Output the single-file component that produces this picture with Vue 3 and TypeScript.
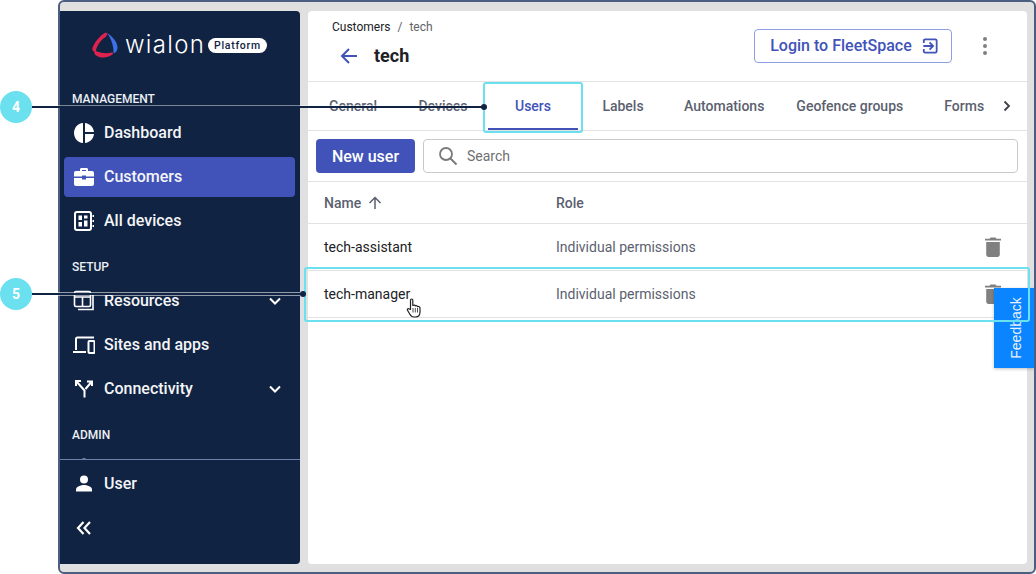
<template>
  <div class="stage">
    <div class="frame">
      <aside class="sidebar">
        <div class="logo">
          <svg class="logo__mark" width="26" height="26" viewBox="0 0 26 26">
            <path d="M13.500 0.500 C8 3.500 2.500 10 0.500 16 C0 19 1.500 20.500 3.800 19 C5 13.500 8.500 8 13 5.500 C14 4.800 15 3.500 15.500 1.500 Z" fill="#e0234e" />
            <path d="M3 18.500 C8 21 14 22 20 20.500 C21 20.500 21.500 21.500 20.500 22.500 C16 25.800 9.500 26.500 5 24 C2.500 23 1.500 20 3 18.500 Z" fill="#e0234e" />
            <path d="M15 1 C20 4 25.500 10 25.500 15.500 C25.500 18.500 23.500 21.500 21.500 21 C21.800 15 20 8 15 1 Z" fill="#3f6fe8" />
          </svg>
          <span class="logo__word">wialon</span>
          <span class="logo__badge">Platform</span>
        </div>

        <nav class="nav">
          <template v-for="group in navGroups" :key="group.title">
            <div class="nav__title">{{ group.title }}</div>
            <div
              v-for="item in group.items"
              :key="item.label"
              class="nav__item"
              :class="{ 'nav__item--active': item.active }"
            >
              <svg class="nav__icon" width="22" height="22" viewBox="0 0 22 22" v-html="item.icon"></svg>
              <span class="nav__label">{{ item.label }}</span>
              <svg v-if="item.expand" class="nav__chevron" width="14" height="14" viewBox="0 0 14 14">
                <path d="M2 4.500 L7 9.500 L12 4.500" fill="none" stroke="#fff" stroke-width="2" />
              </svg>
            </div>
          </template>
        </nav>

        <div class="sidebar__bottom">
          <div class="nav__item">
            <svg class="nav__icon" width="22" height="22" viewBox="0 0 22 22">
              <circle cx="11" cy="6.500" r="4" fill="#fff" />
              <path d="M3 18.500 V16.500 C3 13.500 8 12 11 12 C14 12 19 13.500 19 16.500 V18.500 Z" fill="#fff" />
            </svg>
            <span class="nav__label">User</span>
          </div>
          <div class="nav__item">
            <svg class="nav__icon" width="22" height="22" viewBox="0 0 22 22">
              <path d="M10.500 5 L5 11 L10.500 17 M17 5 L11.500 11 L17 17" fill="none" stroke="#fff" stroke-width="2.200" />
            </svg>
          </div>
        </div>
      </aside>

      <main class="main">
        <header class="head">
          <div class="head__left">
            <div class="crumbs">
              <span class="crumbs__link">Customers</span>
              <span class="crumbs__sep">/</span>
              <span class="crumbs__cur">tech</span>
            </div>
            <div class="head__title">
              <svg width="18" height="18" viewBox="0 0 18 18">
                <path d="M17 9 H2 M9 2 L2 9 L9 16" fill="none" stroke="#4153b8" stroke-width="2" />
              </svg>
              <h1>tech</h1>
            </div>
          </div>
          <button class="login">
            Login to FleetSpace
            <svg width="16" height="16" viewBox="0 0 18 18">
              <path d="M2 5.500 V3 C2 2 2.500 1.500 3.500 1.500 H15 C16 1.500 16.500 2 16.500 3 V15 C16.500 16 16 16.500 15 16.500 H3.500 C2.500 16.500 2 16 2 15 V12.500" fill="none" stroke="#4153b8" stroke-width="2" />
              <path d="M1.500 9 H12 M8.500 5 L12.500 9 L8.500 13" fill="none" stroke="#4153b8" stroke-width="2" />
            </svg>
          </button>
          <div class="more"><i></i><i></i><i></i></div>
        </header>

        <div class="tabs">
          <div class="tabs__strip">
            <div
              v-for="tab in tabs"
              :key="tab"
              class="tab"
              :class="{ 'tab--active': tab === 'Users' }"
            >{{ tab }}</div>
          </div>
          <div class="tabs__next">
            <svg width="12" height="12" viewBox="0 0 12 12">
              <path d="M3.500 1.500 L8 6 L3.500 10.500" fill="none" stroke="#3d4048" stroke-width="1.800" />
            </svg>
          </div>
        </div>

        <div class="toolbar">
          <button class="new-user">New user</button>
          <div class="search">
            <svg width="20" height="20" viewBox="0 0 20 20">
              <circle cx="8" cy="8" r="6" fill="none" stroke="#7a7a7a" stroke-width="1.800" />
              <path d="M12.500 12.500 L18.500 18.500" stroke="#7a7a7a" stroke-width="2" />
            </svg>
            <span>Search</span>
          </div>
        </div>

        <div class="table">
          <div class="row row--head">
            <div class="cell cell--name">
              Name
              <svg width="14" height="14" viewBox="0 0 14 14">
                <path d="M7 13 V1.500 M1.500 7 L7 1.500 L12.500 7" fill="none" stroke="#5b5f70" stroke-width="1.500" />
              </svg>
            </div>
            <div class="cell">Role</div>
          </div>
          <div v-for="user in users" :key="user" class="row">
            <div class="cell cell--name">{{ user }}</div>
            <div class="cell cell--role">Individual permissions</div>
            <svg class="trash" width="16" height="20" viewBox="0 0 16 20">
              <path d="M5.500 0.500 H10.500 L11.500 1.800 H16 V3.600 H0 V1.800 H4.500 Z M1.200 5 H14.800 V17.500 C14.800 19 13.800 20 12.500 20 H3.500 C2.200 20 1.200 19 1.200 17.500 Z" fill="#808080" />
            </svg>
          </div>
        </div>
      </main>

      <div class="feedback"><span>Feedback</span></div>
    </div>

    <!-- annotation overlay -->
    <div class="mark mark--tab"></div>
    <div class="mark mark--row"></div>
    <div class="leader leader--tab"><i></i></div>
    <div class="leader leader--row"><i></i></div>
    <div class="badge badge--tab">4</div>
    <div class="badge badge--row">5</div>
    <svg class="cursor" width="16" height="20" viewBox="0 0 16 20">
      <path d="M4.500 11.500 V2.200 C4.500 0.600 6.800 0.600 6.800 2.200 V7.500 C8 6.900 9 7 9.300 7.900 C10.400 7.400 11.300 7.700 11.500 8.600 C12.700 8.200 14 8.800 14 10.300 V14 C14 17 12.300 19 9.500 19 H8 C5.800 19 4.800 18 3.700 16 L1.500 12.300 C0.800 11 2.400 10 3.300 11 Z" fill="#fff" stroke="#222" stroke-width="1.200" stroke-linejoin="round" />
      <path d="M7 10 V14.500 M9.300 10 V14.500 M11.500 10 V14.500" stroke="#222" stroke-width="0.800" />
    </svg>
  </div>
</template>

<script setup lang="ts">
interface NavItem {
  label: string;
  icon: string;
  active?: boolean;
  expand?: boolean;
}

interface NavGroup {
  title: string;
  items: NavItem[];
}

const navGroups: NavGroup[] = [
  {
    title: 'MANAGEMENT',
    items: [
      {
        label: 'Dashboard',
        icon: '<path d="M10 1 V21 C4.500 20.500 1 16 1 11 C1 6 4.500 1.500 10 1 Z M12 1 C16.500 1.500 20.500 5 21 10 H12 Z M12 12 H21 C20.500 17 16.500 20.500 12 21 Z" fill="#fff"/>'
      },
      {
        label: 'Customers',
        active: true,
        icon: '<path d="M7 5 V3.500 C7 2.500 7.700 2 8.500 2 H13.500 C14.300 2 15 2.500 15 3.500 V5 H19 C20.200 5 21 5.800 21 7 V10.500 H13 V9.500 H9 V10.500 H1 V7 C1 5.800 1.800 5 3 5 Z M9 5 H13 V4 H9 Z M1 12 H9 V13.500 H13 V12 H21 V18 C21 19.200 20.200 20 19 20 H3 C1.800 20 1 19.200 1 18 Z" fill="#fff" fill-rule="evenodd"/>'
      },
      {
        label: 'All devices',
        icon: '<rect x="2" y="2" width="16" height="18" rx="2" fill="none" stroke="#fff" stroke-width="2"/><path d="M5.500 5.500 H9 V10 H5.500 Z M11 5.500 H14.500 V8.500 H11 Z M5.500 12 H9 V16.500 H5.500 Z M11 10.500 H14.500 V16.500 H11 Z M19.500 5 H21 V7 H19.500 Z M19.500 10 H21 V12 H19.500 Z M19.500 15 H21 V17 H19.500 Z" fill="#fff"/>'
      }
    ]
  },
  {
    title: 'SETUP',
    items: [
      {
        label: 'Resources',
        expand: true,
        icon: '<rect x="1.500" y="1.500" width="16" height="15" rx="1.500" fill="none" stroke="#fff" stroke-width="1.600"/><path d="M1.500 7 H17.500 M9.500 7 V16.500 M20 5 V19.500 H5" fill="none" stroke="#fff" stroke-width="1.600"/>'
      },
      {
        label: 'Sites and apps',
        icon: '<path d="M3 16 V5 C3 4 3.700 3.500 4.500 3.500 H21 M0 18 H13" fill="none" stroke="#fff" stroke-width="2"/><rect x="15.500" y="7" width="6" height="12" rx="1" fill="none" stroke="#fff" stroke-width="2"/>'
      },
      {
        label: 'Connectivity',
        expand: true,
        icon: '<path d="M3.500 3.500 L11.500 12.500 V19.500 M12.500 11 L18 4.500 M3 8 V3 H8 M14 3.500 H19 V8" fill="none" stroke="#fff" stroke-width="2"/>'
      }
    ]
  },
  {
    title: 'ADMIN',
    items: [
      {
        label: '',
        icon: '<circle cx="11" cy="4.500" r="4" fill="#fff"/>'
      }
    ]
  }
];

const tabs: string[] = ['General', 'Devices', 'Users', 'Labels', 'Automations', 'Geofence groups', 'Forms'];

const users: string[] = ['tech-assistant', 'tech-manager'];
</script>

<style>
html,
body {
  margin: 0;
  background: #fff;
}
</style>

<style scoped>
.stage {
  position: relative;
  width: 1036px;
  height: 574px;
  overflow: hidden;
  font-family: Roboto, "Liberation Sans", sans-serif;
}

.frame {
  position: relative;
  box-sizing: border-box;
  width: 978px;
  height: 574px;
  margin-left: 58px;
  padding: 9px 7px 8px 0;
  display: flex;
  gap: 8px;
  background: #e0e0e0;
  border: 2px solid #4c5f80;
  border-radius: 6px;
  overflow: hidden;
}

.sidebar {
  width: 240px;
  flex: none;
  display: flex;
  flex-direction: column;
  background: #102342;
  border-radius: 0 4px 4px 0;
  color: #fff;
}

.logo {
  height: 78px;
  flex: none;
  box-sizing: border-box;
  display: flex;
  align-items: center;
  gap: 7px;
  padding: 0 0 10px 32px;
}

.logo__word {
  font-family: Inter, sans-serif;
  font-size: 24px;
  font-weight: 300;
  letter-spacing: 1.3px;
  line-height: 26px;
  margin-right: -4px;
}

.logo__badge {
  background: #fff;
  color: #102342;
  font-size: 10.5px;
  font-weight: 500;
  letter-spacing: 0.7px;
  line-height: 15px;
  padding: 0 6px;
  border-radius: 8px;
}

.nav {
  flex: 1;
  min-height: 0;
  overflow: hidden;
  padding: 0 5px 0 4px;
}

.nav__title {
  height: 20px;
  line-height: 20px;
  margin: 16px 0 4px 8px;
  font-size: 12px;
  font-weight: 500;
  color: #eceff4;
}

.nav__title:first-child {
  margin-top: 0;
}

.nav__item {
  height: 40px;
  margin-bottom: 4px;
  display: flex;
  align-items: center;
  gap: 9px;
  padding: 0 12px 0 9px;
  border-radius: 4px;
}

.nav__item:last-child {
  margin-bottom: 0;
}

.nav__item--active {
  background: #4153b8;
}

.nav__icon {
  flex: none;
}

.nav__label {
  flex: 1;
  margin-top: -2px;
  font-size: 16px;
  font-weight: 500;
  color: #f4f5f8;
}

.nav__chevron {
  margin-right: 1px;
}

.sidebar__bottom {
  flex: none;
  height: 105px;
  box-sizing: border-box;
  padding: 4px 5px 0 4px;
  border-top: 1px solid #6f80ad;
}

.main {
  flex: 1;
  min-width: 0;
  display: flex;
  flex-direction: column;
  background: #fff;
  border-radius: 4px;
  color: #202124;
}

.head {
  height: 71px;
  flex: none;
  box-sizing: border-box;
  display: flex;
  align-items: center;
  padding: 0 40px 12px 24px;
  border-bottom: 1px solid #e2e2e2;
}

.head__left {
  flex: 1;
  margin-top: 7px;
}

.crumbs {
  display: flex;
  gap: 7px;
  margin-top: -1px;
  font-size: 12px;
  line-height: 16px;
}

.crumbs__sep,
.crumbs__cur {
  color: #5f6368;
}

.head__title {
  display: flex;
  align-items: center;
  gap: 16px;
  margin: 9px 0 0 8px;
  height: 24px;
}

.head__title h1 {
  margin: 0;
  font-size: 18px;
  font-weight: 700;
}

.login {
  box-sizing: border-box;
  width: 198px;
  height: 34px;
  margin: 11px 31px 0 0;
  padding: 0 0 0 2px;
  display: flex;
  align-items: center;
  justify-content: center;
  gap: 10px;
  background: #fff;
  border: 1px solid #8f9fe6;
  border-radius: 4px;
  color: #4153b8;
  font-family: inherit;
  font-size: 16px;
  font-weight: 500;
}

.more {
  display: flex;
  flex-direction: column;
  gap: 3px;
  margin-top: 11px;
}

.more i {
  width: 4px;
  height: 4px;
  border-radius: 50%;
  background: #7f7f7f;
}

.tabs {
  height: 49px;
  flex: none;
  box-sizing: border-box;
  display: flex;
  border-bottom: 1px solid #e2e2e2;
}

.tabs__strip {
  flex: 1;
  min-width: 0;
  display: flex;
  overflow: hidden;
}

.tab {
  flex: none;
  box-sizing: border-box;
  min-width: 90px;
  padding: 0 16px;
  line-height: 48px;
  text-align: center;
  font-size: 14px;
  font-weight: 500;
  color: #5b5f70;
}

.tab--active {
  color: #4153b8;
  box-shadow: inset 0 -2px 0 #4153b8;
}

.tabs__next {
  width: 37px;
  flex: none;
  display: flex;
  align-items: center;
  justify-content: center;
  padding-right: 4px;
  box-sizing: border-box;
}

.toolbar {
  height: 51px;
  flex: none;
  box-sizing: border-box;
  display: flex;
  align-items: center;
  gap: 8px;
  padding: 0 9px 0 8px;
  border-bottom: 1px solid #e2e2e2;
}

.new-user {
  width: 99px;
  height: 34px;
  background: #4153b8;
  border: none;
  border-radius: 4px;
  color: #fff;
  font-family: inherit;
  font-size: 16px;
  font-weight: 500;
}

.search {
  flex: 1;
  height: 34px;
  box-sizing: border-box;
  display: flex;
  align-items: center;
  gap: 9px;
  padding-left: 14px;
  border: 1px solid #c9c9c9;
  border-radius: 4px;
  font-size: 14px;
  color: #707070;
}

.row {
  position: relative;
  height: 47px;
  box-sizing: border-box;
  display: flex;
  align-items: center;
  border-bottom: 1px solid #e2e2e2;
  font-size: 14px;
}

.row--head {
  height: 42px;
  font-weight: 500;
  color: #5b5f70;
}

.cell--name {
  width: 248px;
  box-sizing: border-box;
  padding-left: 16px;
  display: flex;
  align-items: center;
  gap: 7px;
}

.cell--role {
  color: #5b5f70;
}

.trash {
  position: absolute;
  right: 26px;
  top: 13px;
}

.feedback {
  position: absolute;
  right: 0;
  top: 286px;
  width: 40px;
  height: 80px;
  box-sizing: border-box;
  padding-left: 3px;
  display: flex;
  align-items: center;
  justify-content: center;
  background: #0a84ff;
  box-shadow: 0 1px 3px rgba(0, 0, 0, 0.25);
}

.feedback span {
  transform: rotate(-90deg);
  white-space: nowrap;
  font-family: "Liberation Sans", sans-serif;
  font-size: 14px;
  color: #e8f3ff;
}

.mark {
  position: absolute;
  box-sizing: border-box;
  border: 2px solid #6be0ef;
  border-radius: 3px;
}

.mark--tab {
  left: 483px;
  top: 82px;
  width: 100px;
  height: 51px;
}

.mark--row {
  left: 304px;
  top: 267px;
  width: 726px;
  height: 55px;
}

.leader {
  position: absolute;
  left: 32px;
  height: 2px;
  background: #102342;
}

.leader i {
  position: absolute;
  right: -3px;
  top: -2px;
  width: 6px;
  height: 6px;
  border-radius: 50%;
  background: #102342;
}

.leader--tab {
  top: 106px;
  width: 452px;
  box-shadow: 0 -1px 0 rgba(255, 255, 255, 0.45);
}

.leader--row {
  top: 293px;
  width: 271px;
  box-shadow: 0 -1px 0 rgba(255, 255, 255, 0.55), 0 1px 0 rgba(255, 255, 255, 0.55);
}

.badge {
  position: absolute;
  left: 0;
  width: 32px;
  height: 32px;
  border-radius: 50%;
  background: #6be0ef;
  color: #fff;
  font-size: 14px;
  font-weight: 700;
  line-height: 32px;
  text-align: center;
}

.badge--tab {
  top: 91px;
}

.badge--row {
  top: 278px;
}

.cursor {
  position: absolute;
  left: 406px;
  top: 298px;
}
</style>
